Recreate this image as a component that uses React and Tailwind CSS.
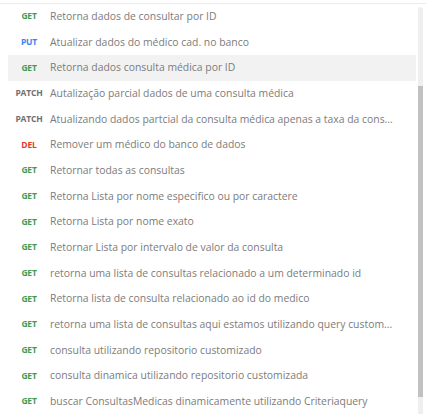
const rows = [
  { m: "GET", t: "Retorna dados de consultar por ID" },
  { m: "PUT", t: "Atualizar dados do médico cad. no banco" },
  { m: "GET", t: "Retorna dados consulta médica por ID", active: true },
  { m: "PATCH", t: "Autalização parcial dados de uma consulta médica" },
  { m: "PATCH", t: "Atualizando dados partcial da consulta médica apenas a taxa da cons..." },
  { m: "DEL", t: "Remover um médico do banco de dados" },
  { m: "GET", t: "Retornar todas as consultas" },
  { m: "GET", t: "Retorna Lista por nome especifico ou por caractere" },
  { m: "GET", t: "Retorna Lista por nome exato" },
  { m: "GET", t: "Retornar Lista por intervalo de valor da consulta" },
  { m: "GET", t: "retorna uma lista de consultas relacionado a um determinado id" },
  { m: "GET", t: "Retorna lista de consulta relacionado ao id do medico" },
  { m: "GET", t: "retorna uma lista de consultas aqui estamos utilizando query custom..." },
  { m: "GET", t: "consulta utilizando repositorio customizado" },
  { m: "GET", t: "consulta dinamica utilizando repositorio customizada" },
  { m: "GET", t: "buscar ConsultasMedicas dinamicamente utilizando Criteriaquery" },
];

const methodColor = {
  GET: "text-[#3f9b57]",
  PUT: "text-[#3b82f6]",
  PATCH: "text-[#707070]",
  DEL: "text-[#e5372f]",
};

export default function App() {
  return (
    <div className="h-[414px] w-[426px] overflow-hidden bg-white font-['Open_Sans',sans-serif]">
      <div className="h-[3px] bg-white" />
      <div className="h-px bg-[#ececec]" />
      <div className="flex">
        <ul className="w-[416px] pl-2">
          {rows.map((r, i) => (
            <li
              key={i}
              className={`flex h-[25.67px] items-center ${r.active ? "bg-[#f2f2f2]" : ""}`}
            >
              <span
                className={`w-[42px] shrink-0 text-center text-[8.5px] font-bold tracking-[-0.2px] ${methodColor[r.m]}`}
              >
                {r.m}
              </span>
              <span className="whitespace-nowrap text-[10.4px] text-[#7c7c7c]">{r.t}</span>
            </li>
          ))}
        </ul>
        <div className="ml-[2px] mt-[3px] flex h-[420px] w-[5px] flex-col rounded-t-full bg-[#efefef]">
          <div className="mt-[79px] h-[311px] bg-[#c1c1c1]" />
        </div>
      </div>
    </div>
  );
}
